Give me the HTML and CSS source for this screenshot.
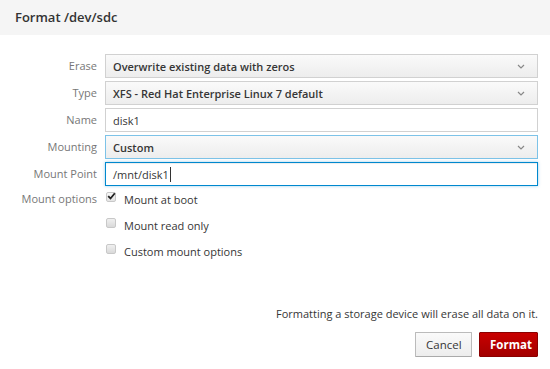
FILE: index.html
```html
<!DOCTYPE html>
<html>
<head>
<meta charset="utf-8">
<link rel="stylesheet" href="styles.css">
</head>
<body>
<div class="dialog">
  <div class="header"><h1 class="title">Format /dev/sdc</h1></div>
  <div class="body">
    <div class="form">
      <label class="lbl">Erase</label>
      <div class="select"><span>Overwrite existing data with zeros</span><svg class="chev" width="8" height="5" viewBox="0 0 8 5"><path d="M1 1 L4 4 L7 1" fill="none" stroke="#888" stroke-width="1.2"/></svg></div>
      <label class="lbl">Type</label>
      <div class="select"><span>XFS - Red Hat Enterprise Linux 7 default</span><svg class="chev" width="8" height="5" viewBox="0 0 8 5"><path d="M1 1 L4 4 L7 1" fill="none" stroke="#888" stroke-width="1.2"/></svg></div>
      <label class="lbl">Name</label>
      <div class="input">disk1</div>
      <label class="lbl">Mounting</label>
      <div class="select focus-ish"><span>Custom</span><svg class="chev" width="8" height="5" viewBox="0 0 8 5"><path d="M1 1 L4 4 L7 1" fill="none" stroke="#888" stroke-width="1.2"/></svg></div>
      <label class="lbl">Mount Point</label>
      <div class="input focus">/mnt/disk1<span class="caret"></span></div>
      <label class="lbl lbl-top">Mount options</label>
      <div class="checks">
        <div class="check"><span class="box checked"><svg width="9" height="8" viewBox="0 0 9 8"><path d="M1.2 4.2 L3.5 6.5 L7.8 1.3" fill="none" stroke="#222" stroke-width="1.8"/></svg></span>Mount at boot</div>
        <div class="check"><span class="box"></span>Mount read only</div>
        <div class="check"><span class="box"></span>Custom mount options</div>
      </div>
    </div>
  </div>
  <div class="footer">
    <p class="warn">Formatting a storage device will erase all data on it.</p>
    <div class="buttons">
      <button class="btn btn-default">Cancel</button>
      <button class="btn btn-danger">Format</button>
    </div>
  </div>
</div>
</body>
</html>
```
FILE: styles.css
```css
html, body {
  margin: 0;
  padding: 0;
  background: #fff;
}
body {
  font-family: "Open Sans", "Liberation Sans", sans-serif;
  font-size: 11px;
  color: #363636;
}
.dialog {
  width: 550px;
  height: 369px;
  display: flex;
  flex-direction: column;
}
.header {
  background: #f5f5f5;
  height: 35px;
  box-sizing: border-box;
  padding: 0 15px;
  display: flex;
  align-items: center;
}
.title {
  margin: 0;
  font-size: 13px;
  font-weight: 600;
  color: #333;
  position: relative;
  top: -1px;
}
.body {
  padding: 19px 12px 0 12px;
  flex: 1;
}
.form {
  display: grid;
  grid-template-columns: 85px 1fr;
  column-gap: 8px;
  row-gap: 3px;
}
.lbl {
  text-align: right;
  color: #777;
  font-size: 11px;
  line-height: 24px;
}
.lbl-top {
  line-height: 20px;
  margin-top: 0;
}
.select, .input {
  height: 24px;
  box-sizing: border-box;
  border: 1px solid #d1d1d1;
  display: flex;
  align-items: center;
  padding: 0 7px;
  font-size: 11px;
}
.select {
  background: linear-gradient(#fafafa, #ededed);
  font-weight: 600;
  color: #363636;
  justify-content: space-between;
  padding-right: 12px;
}
.focus-ish {
  border-color: #7dc3e8;
}
.input {
  background: #fff;
  color: #363636;
}
.input.focus {
  border-color: #0088ce;
  box-shadow: inset 0 1px 1px rgba(3,3,3,.075), 0 0 3px rgba(0,136,206,.4);
}
.caret {
  display: inline-block;
  width: 1px;
  height: 15px;
  background: #333;
  margin-left: 1px;
}
.chev {
  display: block;
}
.checks {
  display: flex;
  flex-direction: column;
  gap: 6px;
  margin-top: 0;
}
.check {
  display: flex;
  align-items: center;
  height: 20px;
  font-size: 11px;
  color: #363636;
}
.box {
  width: 10px;
  height: 10px;
  box-sizing: border-box;
  border: 1px solid #c8c8c8;
  border-radius: 2px;
  background: linear-gradient(#f0f0f0, #d9d9d9);
  margin: 0 8px 4px 1px;
  position: relative;
  display: flex;
  align-items: center;
  justify-content: center;
}
.box.checked {
  background: linear-gradient(#f7f7f7, #e4e4e4);
}
.box svg {
  position: absolute;
  left: 0;
  top: -1px;
}
.footer {
  padding: 0 12px 12px 12px;
  display: flex;
  flex-direction: column;
  align-items: flex-end;
}
.warn {
  margin: 0 0 11px 0;
  font-size: 11px;
  color: #363636;
}
.buttons {
  display: flex;
  gap: 7px;
}
.btn {
  font-family: inherit;
  font-size: 11.5px;
  height: 25px;
  padding: 0 10px;
  border-radius: 1px;
  cursor: pointer;
}
.btn-default {
  background: linear-gradient(#fafafa, #ededed);
  border: 1px solid #bbb;
  border-bottom-color: #aaa;
  color: #363636;
  width: 57px;
}
.btn-danger {
  background: linear-gradient(#c90000, #a30000);
  border: 1px solid #8b0000;
  color: #fff;
  font-weight: 700;
  width: 59px;
}
```
